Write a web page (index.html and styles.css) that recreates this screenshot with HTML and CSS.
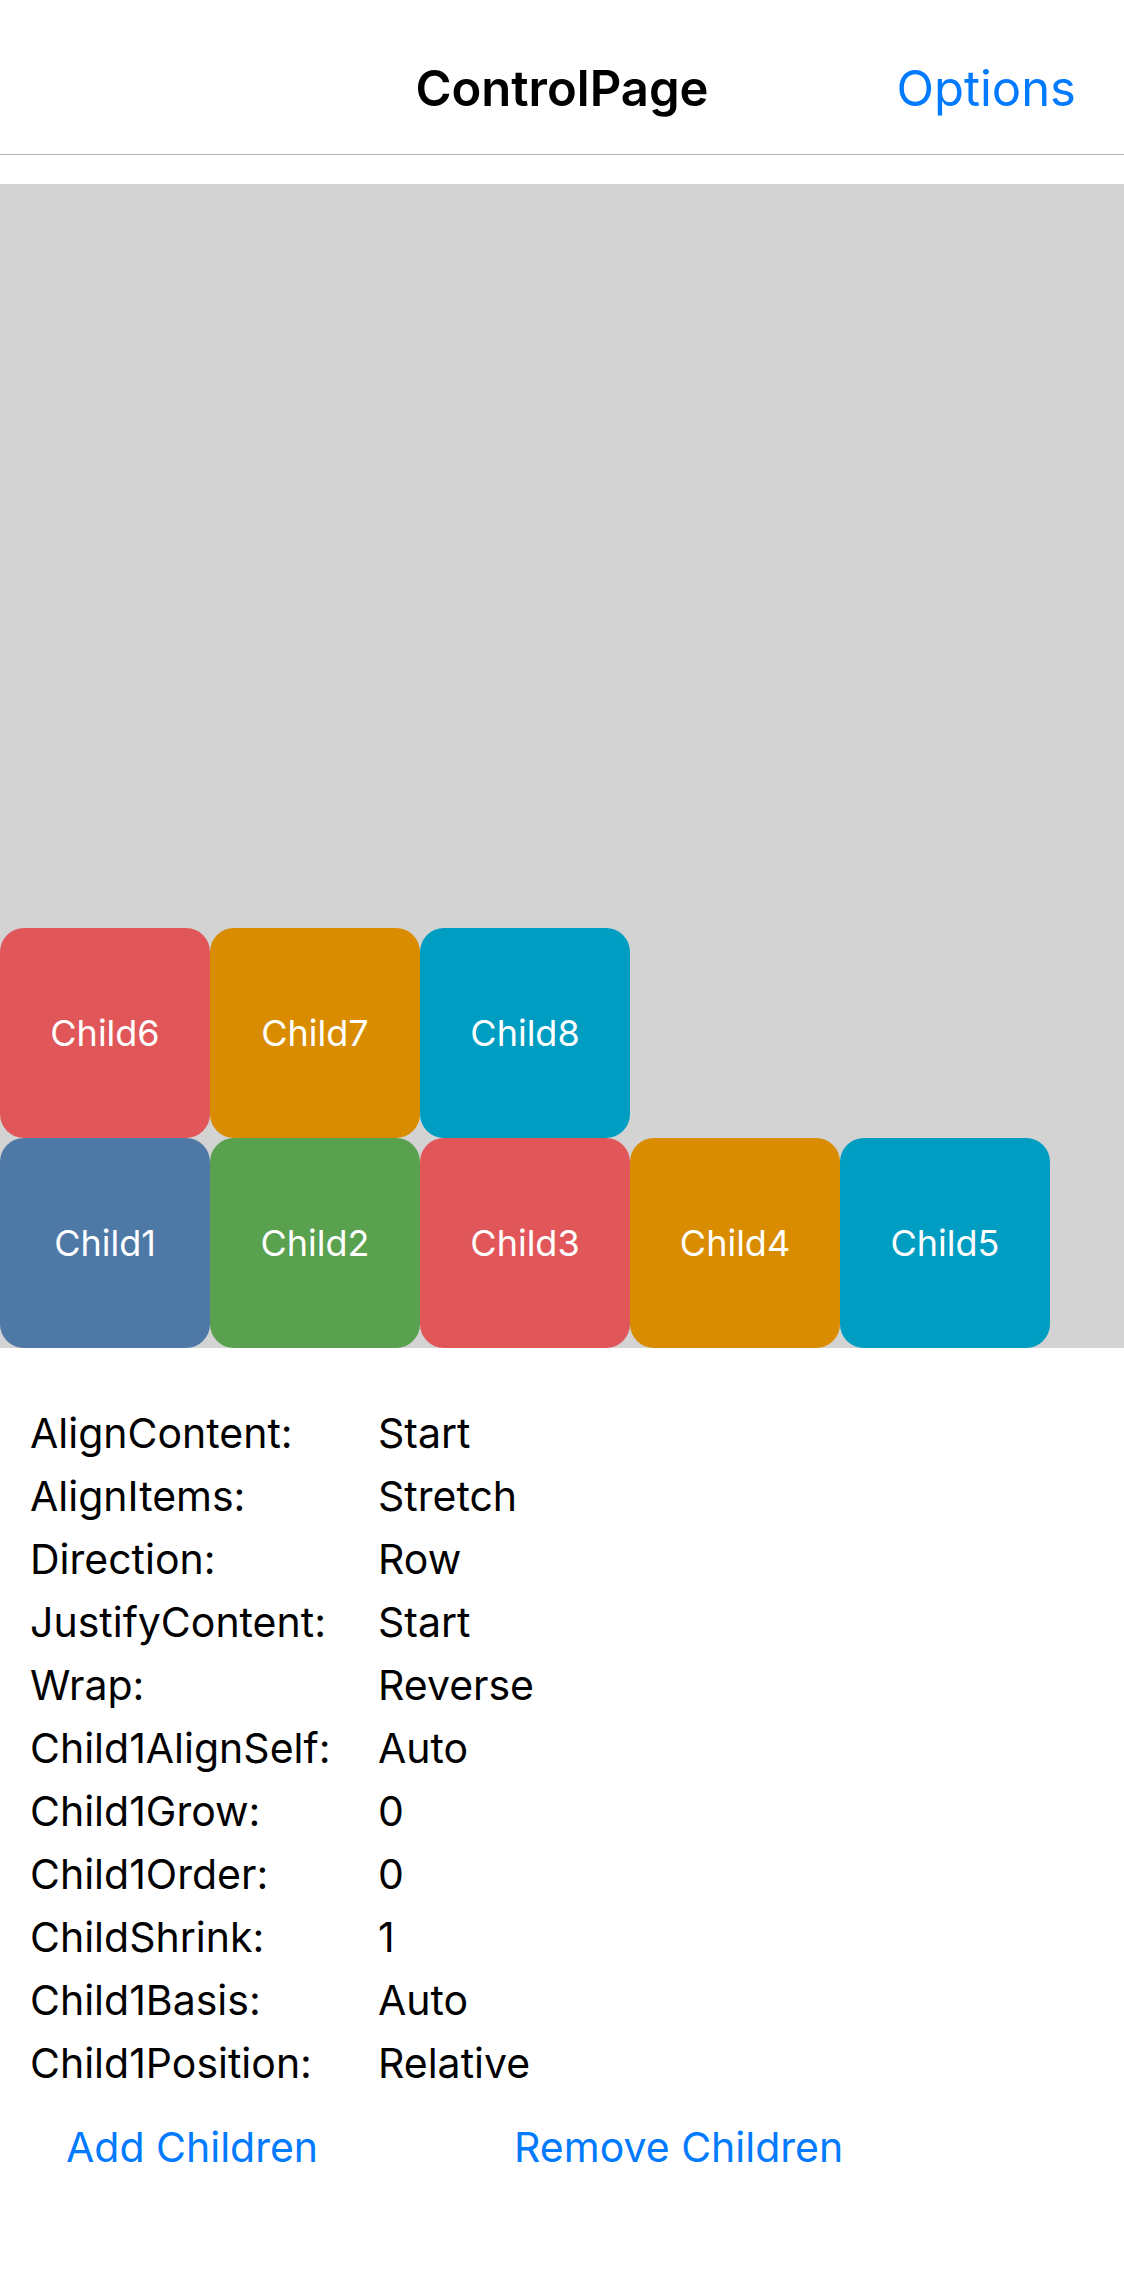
FILE: index.html
```html
<!DOCTYPE html>
<html lang="en">
<head>
<meta charset="utf-8">
<meta name="viewport" content="width=device-width, initial-scale=1">
<title>ControlPage</title>
<link rel="stylesheet" href="styles.css">
</head>
<body>
<header class="navbar">
<h1 class="title">ControlPage</h1>
<button class="link-button options" type="button">Options</button>
</header>
<main>
<section class="flex-demo" aria-label="Children">
<div class="child blue">Child1</div>
<div class="child green">Child2</div>
<div class="child red">Child3</div>
<div class="child orange">Child4</div>
<div class="child cyan">Child5</div>
<div class="child red">Child6</div>
<div class="child orange">Child7</div>
<div class="child cyan">Child8</div>
</section>
<dl class="settings">
<dt>AlignContent:</dt><dd>Start</dd>
<dt>AlignItems:</dt><dd>Stretch</dd>
<dt>Direction:</dt><dd>Row</dd>
<dt>JustifyContent:</dt><dd>Start</dd>
<dt>Wrap:</dt><dd>Reverse</dd>
<dt>Child1AlignSelf:</dt><dd>Auto</dd>
<dt>Child1Grow:</dt><dd>0</dd>
<dt>Child1Order:</dt><dd>0</dd>
<dt>ChildShrink:</dt><dd>1</dd>
<dt>Child1Basis:</dt><dd>Auto</dd>
<dt>Child1Position:</dt><dd>Relative</dd>
</dl>
<div class="actions">
<button class="link-button" type="button">Add Children</button>
<button class="link-button" type="button">Remove Children</button>
</div>
</main>
</body>
</html>
```
FILE: styles.css
```css
* {
  box-sizing: border-box;
}

body {
  margin: 0;
  background: #fff;
  color: #000;
  font-family: Inter, "Liberation Sans", sans-serif;
  font-size: 41px;
}

.navbar {
  display: grid;
  grid-template-columns: 1fr auto 1fr;
  align-items: center;
  padding: 46px 48px 23px;
  line-height: 85px;
  border-bottom: 1px solid #b2b2b2;
}

.title {
  grid-column: 2;
  margin: 0;
  font-size: 49px;
  font-weight: 600;
}

.link-button {
  padding: 0;
  border: 0;
  background: none;
  color: #007aff;
  font: inherit;
  cursor: pointer;
}

.options {
  justify-self: end;
  font-size: 49px;
}

.flex-demo {
  display: flex;
  flex-wrap: wrap-reverse;
  align-content: flex-start;
  min-height: 1164px;
  margin-top: 29px;
  background: #d3d3d3;
}

.child {
  display: flex;
  align-items: center;
  justify-content: center;
  width: 210px;
  height: 210px;
  border-radius: 24px;
  color: #fff;
  font-size: 36px;
}

.blue { background: #4e79a7; }
.green { background: #59a14f; }
.red { background: #e15759; }
.orange { background: #d98c00; }
.cyan { background: #009dc2; }

.settings {
  display: grid;
  grid-template-columns: 348px 1fr;
  margin: 54px 30px 0;
  line-height: 63px;
}

.settings dd {
  margin: 0;
}

.actions {
  display: flex;
  gap: 196px;
  padding: 27px 66px;
}
```
